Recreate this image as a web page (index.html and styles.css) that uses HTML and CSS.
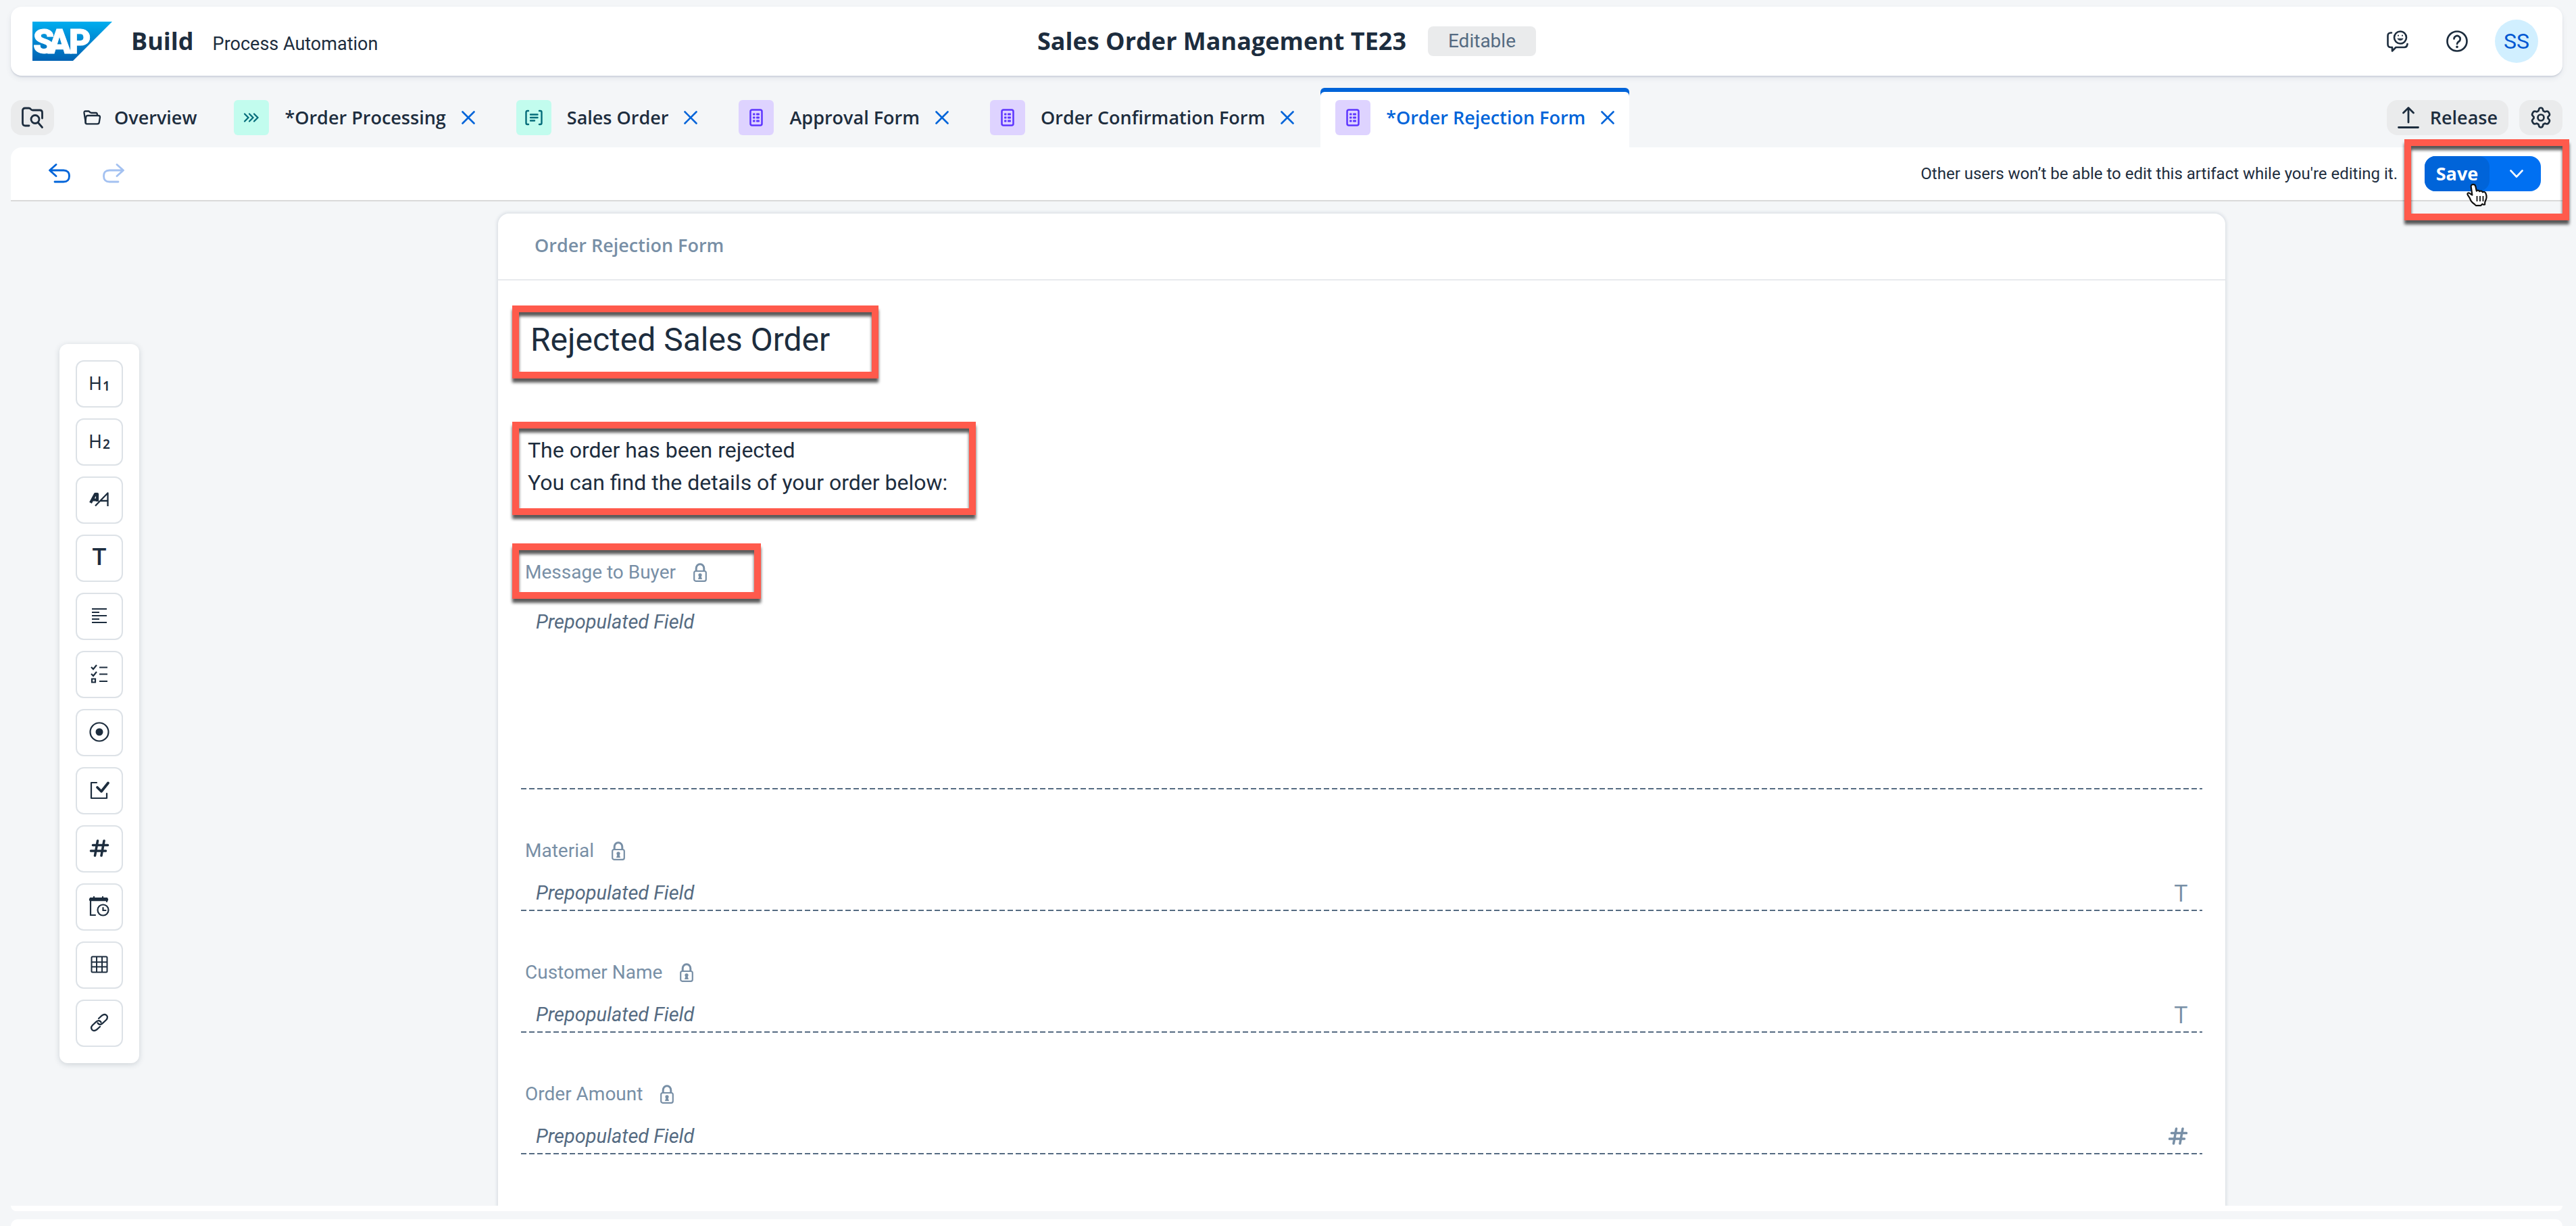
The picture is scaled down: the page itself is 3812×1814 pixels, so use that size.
FILE: index.html
```html
<!DOCTYPE html>
<html lang="en">
<head>
<meta charset="utf-8">
<title>SAP Build Process Automation</title>
<link rel="stylesheet" href="styles.css">
</head>
<body>
<svg class="defs" aria-hidden="true">
  <symbol id="i-close" viewBox="0 0 20 20"><path d="M1.500 1.500 18.500 18.500M18.500 1.500 1.500 18.500" fill="none" stroke="currentColor" stroke-width="2.600" stroke-linecap="round"/></symbol>
  <symbol id="i-form" viewBox="0 0 20 26"><rect x="1.500" y="1.500" width="17" height="23" rx="2.500" fill="none" stroke="currentColor" stroke-width="2.500"/><g fill="currentColor"><rect x="5" y="6.500" width="3.500" height="3" rx="1"/><rect x="10" y="6.500" width="5" height="3" rx="1"/><rect x="5" y="11.500" width="3.500" height="3" rx="1"/><rect x="10" y="11.500" width="5" height="3" rx="1"/><rect x="5" y="16.500" width="3.500" height="3" rx="1"/><rect x="10" y="16.500" width="5" height="3" rx="1"/></g></symbol>
  <symbol id="i-lock" viewBox="0 0 20 28"><rect x="1.200" y="12" width="17.600" height="14.800" rx="2.500" fill="none" stroke="currentColor" stroke-width="2.200"/><path d="M4.200 12V8a5.800 6.300 0 0 1 11.600 0v4" fill="none" stroke="currentColor" stroke-width="3"/><circle cx="10" cy="17.800" r="2.600" fill="currentColor"/><path d="M9 18h2l2 6H7z" fill="currentColor"/></symbol>
  <symbol id="i-hash" viewBox="0 0 28 26"><path d="M11.500 2 7.500 24M21 2l-4 22M4.500 8.500h22M1.500 17h22" fill="none" stroke="currentColor" stroke-width="3.600" stroke-linecap="round"/></symbol>
</svg>

<header class="shell">
  <div class="brand">
    <svg class="logo" viewBox="0 0 118 58" role="img" aria-label="SAP">
      <defs><linearGradient id="sap" x1="0" y1="0" x2="0" y2="1"><stop offset="0" stop-color="#00aeef"/><stop offset=".5" stop-color="#0086d0"/><stop offset="1" stop-color="#0062b3"/></linearGradient></defs>
      <path d="M0 0h118L60 58H0z" fill="url(#sap)"/>
      <text class="logo-text" x="1 23 54" y="47">SAP</text>
    </svg>
    <span class="brand-name">Build</span>
    <span class="brand-sub">Process Automation</span>
  </div>
  <div class="project">
    <h1 class="project-name">Sales Order Management TE23</h1>
    <span class="badge">Editable</span>
  </div>
  <div class="tools">
    <button class="plain" aria-label="Feedback"><svg width="32" height="32" viewBox="0 0 32 32" fill="none" stroke="currentColor" stroke-width="2.600" stroke-linecap="round" stroke-linejoin="round"><path d="M7 3.500H6Q1.500 3.500 1.500 8v12.500Q1.500 25 6 25h2v5.500L13.500 25H26q4 0 4.500-5"/><circle cx="20" cy="10.500" r="9"/><path d="M16 12.500a4.300 3 0 0 0 8 0z" fill="currentColor" stroke-width="1"/><path d="M17 7.500v.2M23 7.500v.2" stroke-width="2"/></svg></button>
    <button class="plain help" aria-label="Help"><svg width="32" height="32" viewBox="0 0 32 32" fill="none" stroke="currentColor" stroke-width="2.700" stroke-linecap="round" stroke-linejoin="round"><circle cx="16" cy="16" r="14.500"/><path d="M11.500 12.500a4.600 4.600 0 1 1 7 4Q16 18 16 20"/><path d="M16 24.300v.2" stroke-width="3.600"/></svg></button>
    <button class="avatar">SS</button>
  </div>
</header>

<nav class="tabs">
  <button class="soft icon-only" aria-label="Find artifacts"><svg width="32" height="32" viewBox="0 0 32 32" fill="none" stroke="currentColor" stroke-width="2.800" stroke-linecap="round" stroke-linejoin="round"><path d="M11 28H5.500Q1.500 28 1.500 24V5.500Q1.500 2 5 2h5.500q2 0 3 1.500T16.500 5H27q3.500 0 3.500 3.500V17"/><circle cx="20" cy="18.500" r="6"/><path d="m24.500 23.500 6 7"/></svg></button>
  <div class="tab overview"><svg width="26" height="22" viewBox="0 0 26 22" fill="none" stroke="currentColor" stroke-width="2.300" stroke-linejoin="round"><path d="M4 20 1.500 4Q1.200 1.500 3.500 1.500h5Q10 3.500 12 4h7q2 0 2 3.500"/><path d="M5.500 20.300h15.500q2.500 0 2.800-2.500L25 10.500Q25 8 22.500 8H7Q4.500 8 4.200 10.500L3.500 18q0 2.300 2 2.300z"/></svg><a href="#overview">Overview</a></div>
  <div class="tab"><span class="tile green"><svg width="24" height="14" viewBox="0 0 24 14" fill="none" stroke="currentColor" stroke-width="2.200" stroke-linecap="round"><path d="m2 1.500 5.500 5.500L2 12.500M9 1.500 14.500 7 9 12.500M16 1.500 21.500 7 16 12.500"/></svg></span><a href="#processing">*Order Processing</a><button class="close" aria-label="Close"><svg width="20" height="20"><use href="#i-close"/></svg></button></div>
  <div class="tab"><span class="tile green"><svg width="26" height="24" viewBox="0 0 26 24" fill="none" stroke="currentColor" stroke-width="2.400" stroke-linecap="round"><path d="M5 2H3.500Q1.500 2 1.500 4v16q0 2 2 2H5M21 2h1.500q2 0 2 2v16q0 2-2 2H21M8 7.500h10.500M8 12h10.500M8 16.500h6"/></svg></span><a href="#sales">Sales Order</a><button class="close" aria-label="Close"><svg width="20" height="20"><use href="#i-close"/></svg></button></div>
  <div class="tab"><span class="tile purple"><svg width="20" height="26"><use href="#i-form"/></svg></span><a href="#approval">Approval Form</a><button class="close" aria-label="Close"><svg width="20" height="20"><use href="#i-close"/></svg></button></div>
  <div class="tab"><span class="tile purple"><svg width="20" height="26"><use href="#i-form"/></svg></span><a href="#confirmation">Order Confirmation Form</a><button class="close" aria-label="Close"><svg width="20" height="20"><use href="#i-close"/></svg></button></div>
  <div class="tab active"><span class="tile purple"><svg width="20" height="26"><use href="#i-form"/></svg></span><a href="#rejection" aria-current="page">*Order Rejection Form</a><button class="close" aria-label="Close"><svg width="20" height="20"><use href="#i-close"/></svg></button></div>
  <div class="tab-actions">
    <button class="soft"><svg width="32" height="32" viewBox="0 0 32 32" fill="none" stroke="currentColor" stroke-width="2.800" stroke-linecap="round" stroke-linejoin="round"><path d="M16 23V2M8.500 9 16 1.500 23.500 9M1.500 30.500h29"/></svg>Release</button>
    <button class="soft icon-only" aria-label="Settings"><svg width="32" height="32" viewBox="0 0 32 32" fill="none" stroke="currentColor" stroke-width="2.700" stroke-linejoin="round"><path d="M16 1.500q2.300 0 2.900 2.300l.6 2.200 2.400 1.400 2.300-.7q2.200-.5 3.400 1.500l.9 1.600q1.100 2-.5 3.600L26.500 15v2l1.500 1.600q1.600 1.600.5 3.600l-.9 1.600q-1.200 2-3.400 1.500l-2.300-.7-2.400 1.400-.6 2.200q-.6 2.300-2.900 2.300t-2.900-2.300l-.6-2.200-2.400-1.400-2.300.7q-2.200.5-3.400-1.500l-.9-1.600q-1.100-2 .5-3.600L5.500 17v-2L4 13.400q-1.600-1.600-.5-3.600l.9-1.600q1.200-2 3.400-1.500l2.300.7 2.400-1.400.6-2.200Q13.700 1.500 16 1.500z"/><circle cx="16" cy="16" r="4.500"/></svg></button>
  </div>
</nav>

<div class="toolbar">
  <button class="plain undo" aria-label="Undo"><svg width="32" height="30" viewBox="0 0 32 30" fill="none" stroke="currentColor" stroke-width="2.800" stroke-linecap="round" stroke-linejoin="round"><path d="M11 1.500 1.500 10l9.500 8.500M2 10h20q8.500 0 8.500 8.500 0 8.500-8.500 8.500H9"/></svg></button>
  <button class="plain redo" aria-label="Redo" disabled><svg width="32" height="30" viewBox="0 0 32 30" fill="none" stroke="currentColor" stroke-width="2.800" stroke-linecap="round" stroke-linejoin="round"><path d="M21 1.500 30.500 10 21 18.500M30 10H10q-8.500 0-8.500 8.500Q1.500 27 10 27h13"/></svg></button>
  <p class="notice">Other users won’t be able to edit this artifact while you're editing it.</p>
  <div class="save-group">
    <button class="save">Save</button>
    <button class="save-menu" aria-label="More save options"><svg width="20" height="12" viewBox="0 0 20 12" fill="none" stroke="currentColor" stroke-width="2.600" stroke-linecap="round" stroke-linejoin="round"><path d="m1.500 1.500 8.500 9 8.500-9"/></svg></button>
    <svg class="pointer" width="32" height="36" viewBox="0 0 32 36"><path d="M10 1.800c2 0 3 1.200 3.400 3.200l1.400 6.600c1-1.500 3.700-1.300 4.500.6 1.400-1.200 3.900-.8 4.500 1.200 1.500-1.200 3.900-.4 4.600 1.600 1.700 3.800 1.200 8.400-.6 11.600-.8 1.600-.9 2.700-.7 4.900q-2 .8-3.600-.7-1.300 1.500-2.700 2.400h-6.600q-1.300-.8-1.900-1.700c-3.300-2.200-6-5-7.200-8.700-.8-2.500-3.300-4.200-3.700-6.500-.2-1.600 1.300-2.300 2.800-1.600 1.600.8 2.700 2.200 4.200 2.900L6.700 5.500C6.200 3.300 8 1.800 10 1.800z" fill="#fff" stroke="#111" stroke-width="2.200" stroke-linejoin="round"/><path d="M15.500 19v8M20 19v8M24.500 19v8" stroke="#111" stroke-width="1.800"/></svg>
    <span class="mark mark-save"></span>
  </div>
</div>

<main class="workspace">
  <aside class="side">
    <div class="palette">
      <button aria-label="Headline 1"><span class="h">H</span><span class="n">1</span></button>
      <button aria-label="Headline 2"><span class="h">H</span><span class="n">2</span></button>
      <button aria-label="Paragraph"><svg width="32" height="24" viewBox="0 0 32 24" fill="none" stroke="currentColor" stroke-linejoin="round"><path d="m3 17 7-13h3v11M7 12.500h6" stroke-width="4.200"/><path d="M10 21.500 28.500 2.500V22M18 14h10" stroke-width="2.300"/></svg></button>
      <button aria-label="Text"><span class="t">T</span></button>
      <button aria-label="Text area"><svg width="24" height="24" viewBox="0 0 24 24" fill="none" stroke="currentColor" stroke-width="2.200"><path d="M1 2h22M1 7h11M1 12h22M1 17h11M1 22h22"/></svg></button>
      <button aria-label="Checklist"><svg width="26" height="28" viewBox="0 0 26 28" fill="none" stroke="currentColor" stroke-width="2.200"><path d="m1 4 3 3 5-6M1 14l3 3 5-6M2 21.500h5v5H2zM13 4.500h12M13 14.500h12M13 25h12"/></svg></button>
      <button aria-label="Choice"><svg width="30" height="30" viewBox="0 0 30 30" fill="none" stroke="currentColor" stroke-width="2.200"><circle cx="15" cy="15" r="13.500"/><circle cx="15" cy="15" r="5.500" fill="currentColor" stroke="none"/></svg></button>
      <button aria-label="Checkbox"><svg width="30" height="28" viewBox="0 0 30 28" fill="none" stroke="currentColor" stroke-width="2.200" stroke-linecap="round" stroke-linejoin="round"><path d="M11 3H3v23h23v-7"/><path d="m12 10 6 6L28 3.500" stroke-width="3.800"/></svg></button>
      <button aria-label="Number"><svg width="30" height="26"><use href="#i-hash"/></svg></button>
      <button aria-label="Date and time"><svg width="30" height="30" viewBox="0 0 30 30" fill="none" stroke="currentColor" stroke-width="2.200" stroke-linecap="round"><path d="M9 28H2V3h24v5"/><path d="M2 5h24" stroke-width="4.500"/><path d="M7 1v3M20 1v3"/><circle cx="20.500" cy="20.500" r="8"/><path d="M20.500 17v4h4"/></svg></button>
      <button aria-label="Table"><svg width="26" height="26" viewBox="0 0 26 26" fill="none" stroke="currentColor" stroke-width="2"><rect x="1.500" y="1.500" width="23" height="23" rx="1.500"/><path d="M9 1v24M17 1v24M1 9.500h24M1 16.500h24"/></svg></button>
      <button aria-label="Link"><svg width="28" height="28" viewBox="0 0 28 28" fill="none" stroke="currentColor" stroke-width="2.300" stroke-linecap="round"><path d="m13 8 5-4.500q4-3 6.700-.2 2.700 3-.5 6.700l-6 5.500q-4 3-6.700-1"/><path d="m15 20-5 4.500q-4 3-6.700.2-2.700-3 .5-6.700l6-5.500q4-3 6.700 1"/></svg></button>
    </div>
  </aside>

  <form class="card">
    <header class="card-head">Order Rejection Form</header>
    <div class="card-body">
      <div class="headline">
        <h2>Rejected Sales Order</h2>
        <span class="mark mark-title"></span>
      </div>
      <div class="intro">
        <p>The order has been rejected</p>
        <p>You can find the details of your order below:</p>
        <span class="mark mark-intro"></span>
      </div>
      <div class="field">
        <label for="message">Message to Buyer <svg width="20" height="28"><use href="#i-lock"/></svg></label>
        <textarea id="message" readonly>Prepopulated Field</textarea>
        <span class="mark mark-label"></span>
      </div>
      <div class="field">
        <label for="material">Material <svg width="20" height="28"><use href="#i-lock"/></svg></label>
        <div class="line"><input id="material" value="Prepopulated Field" readonly><span class="type">T</span></div>
      </div>
      <div class="field">
        <label for="customer">Customer Name <svg width="20" height="28"><use href="#i-lock"/></svg></label>
        <div class="line"><input id="customer" value="Prepopulated Field" readonly><span class="type">T</span></div>
      </div>
      <div class="field">
        <label for="amount">Order Amount <svg width="20" height="28"><use href="#i-lock"/></svg></label>
        <div class="line"><input id="amount" value="Prepopulated Field" readonly><svg class="hash" width="28" height="26"><use href="#i-hash"/></svg></div>
      </div>
    </div>
  </form>
</main>
<div class="panel-end"></div>
<footer class="next-panel"></footer>
</body>
</html>
```
FILE: styles.css
```css
* { box-sizing: border-box; }

body {
  margin: 0;
  padding: 10px 20px 0 16px;
  height: 100vh;
  overflow: hidden;
  display: flex;
  flex-direction: column;
  background: #f4f6f8;
  color: #1d2d3e;
  font: 28px/40px Roboto, sans-serif;
}

h1, h2, p { margin: 0; font-weight: 400; }
button { font: inherit; color: inherit; border: 0; margin: 0; padding: 0; background: none; display: flex; align-items: center; justify-content: center; }
svg { display: block; flex: none; overflow: visible; }
a { color: inherit; text-decoration: none; }
.defs { position: absolute; width: 0; height: 0; }

/* Shell bar */
.shell {
  display: grid;
  grid-template-columns: 1fr auto 1fr;
  align-items: center;
  height: 102px;
  flex: none;
  padding: 0 32px;
  background: #fff;
  border-radius: 16px;
  box-shadow: 0 2px 2px rgba(34, 53, 90, .12), 0 4px 8px rgba(34, 53, 90, .08);
}
.brand { display: flex; align-items: baseline; }
.logo { width: 118px; height: 58px; align-self: center; margin-right: 28px; }
.logo-text { fill: #fff; stroke: #fff; stroke-width: 1; font: 900 50px Roboto, sans-serif; }
.brand-name, .project-name { font: 700 36px/60px "Open Sans", sans-serif; }
.brand-name { margin-right: 28px; }
.brand-sub { font-size: 27px; }
.project { display: flex; align-items: center; gap: 32px; }
.badge { width: 160px; height: 44px; line-height: 44px; text-align: center; color: #556b82; background: #eaebec; border-radius: 8px; }
.tools { display: flex; align-items: center; justify-content: flex-end; padding-right: 4px; }
.help { margin: 0 40px 0 56px; }
.avatar { width: 64px; height: 64px; border-radius: 50%; background: #d1efff; color: #0057d2; font-size: 32px; }

/* Tabs */
.tabs { display: flex; height: 88px; margin-top: 18px; flex: none; font: 600 27px/40px "Open Sans", sans-serif; }
.soft { height: 52px; margin-top: 18px; padding: 0 16px; gap: 16px; background: #eaebec; border-radius: 16px; }
.icon-only { width: 64px; }
.tab { display: flex; align-items: center; gap: 23px; padding: 0 22px; margin-left: 17px; border-radius: 6px 6px 0 0; white-space: nowrap; }
.overview { gap: 20px; padding: 0 16px 0 26px; }
.active { box-shadow: inset 0 6px #0064d9; background: #fff; color: #0064d9; }
.tile { width: 52px; height: 52px; border-radius: 6px; display: flex; align-items: center; justify-content: center; }
.green { background: #c2fcee; color: #046c7a; }
.purple { background: #ded3ff; color: #5d36ff; }
.close { color: #0064d9; }
.tab-actions { display: flex; gap: 16px; margin-left: auto; }

/* Toolbar */
.toolbar { display: flex; align-items: center; height: 80px; flex: none; padding: 0 32px 0 56px; background: #fff; border-bottom: 2px solid #d9d9d9; border-radius: 16px 0 0 0; }
.undo { color: #0064d9; }
.redo { margin-left: 48px; color: #a3c1f1; }
.notice { margin-left: auto; font-size: 24px; }
.save-group { position: relative; display: flex; width: 172px; height: 52px; margin-left: 40px; border-radius: 16px; background: #0070f2; color: #fff; }
.save { width: 96px; border-radius: 16px; background: #0064d9; font: 700 27px/40px "Open Sans", sans-serif; }
.save-menu { flex: 1; padding-left: 4px; }
.pointer { position: absolute; left: 62px; top: 40px; z-index: 2; }

/* Red call-out frames lying over the page */
.mark { position: absolute; z-index: 1; border: 10px solid #ff5a4c; filter: drop-shadow(0 6px 2px rgba(0, 0, 0, .65)); pointer-events: none; }
.mark-save { left: -30px; top: -25px; width: 244px; height: 120px; }
.mark-title { left: -13px; top: -21px; width: 542px; height: 108px; }
.mark-intro { left: -13px; top: -18px; width: 686px; height: 138px; }
.mark-label { left: -13px; top: -23px; width: 368px; height: 82px; }

/* Workspace */
.workspace { display: grid; grid-template-columns: 721fr 2556fr 499fr; flex: 1; min-height: 0; overflow: hidden; padding-top: 18px; }
.palette { display: flex; flex-direction: column; gap: 16px; width: 118px; margin: 193px 0 0 72px; padding: 24px; background: #fff; border-radius: 12px; box-shadow: 0 2px 8px rgba(34, 53, 72, .18); }
.palette button { height: 70px; border: 2px solid #dde2e7; border-radius: 12px; padding-bottom: 2px; }
.h { font: 400 27px/40px "Noto Sans", sans-serif; }
.n { font: 600 19px/20px "Noto Sans", sans-serif; margin: 8px 0 0 1px; }
.t { font: 500 35px/40px Roboto, sans-serif; }

.card { background: #fff; border-radius: 16px 16px 0 0; box-shadow: 0 0 4px 2px #dce1e6; }
.card-head { height: 99px; padding-left: 54px; border-bottom: 2px solid #e8eaed; color: #788fa6; font: 600 27px/94px "Open Sans", sans-serif; }
.card-body { padding: 58px 34px 0; }
.headline { position: relative; padding-left: 14px; }
.headline h2 { font-size: 48px; line-height: 60px; }
.intro { position: relative; margin-top: 109px; padding-left: 10px; font-size: 32px; line-height: 48px; }
.field { position: relative; margin-top: 71px; }
.intro + .field { margin-top: 89px; }
.field label { display: flex; align-items: center; gap: 26px; height: 40px; padding-left: 6px; color: #788fa6; }
.field textarea, .line {
  display: flex;
  width: 100%;
  margin-top: 17px;
  border: 0;
  background: repeating-linear-gradient(90deg, #556b82 0 8px, transparent 8px 12px) left bottom / 100% 2px no-repeat;
}
.field textarea, .line input { color: #556b82; font: italic 29px/34px Roboto, sans-serif; outline: 0; resize: none; }
.field textarea { height: 284px; padding: 19px 22px; }
.line { align-items: center; height: 52px; padding: 0 22px 2px; }
.line input { flex: 1; border: 0; padding: 0; background: none; }
.type { color: #788fa6; font: 400 35px/40px "Open Sans", sans-serif; }
.hash { color: #788fa6; }

/* Bottom edge */
.panel-end { height: 8px; flex: none; background: #fff; border-radius: 0 0 16px 16px; }
.next-panel { height: 10px; flex: none; margin-top: 12px; background: #fff; border-radius: 16px 16px 0 0; }
```
